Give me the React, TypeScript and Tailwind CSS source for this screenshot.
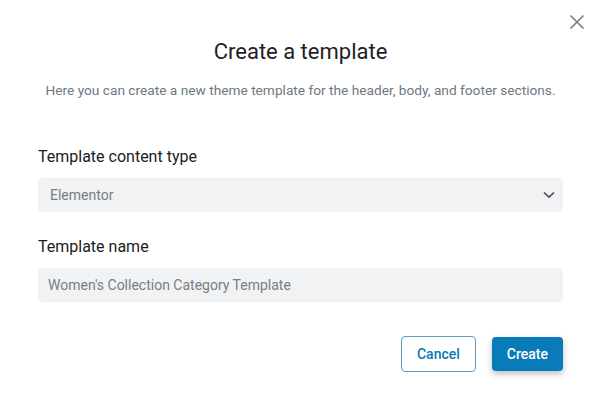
export default function App() {
  return (
    <div
      className="relative h-[409px] w-[601px] bg-white px-[38px] text-[#1f2124]"
      style={{ fontFamily: 'Roboto, "Liberation Sans", sans-serif' }}
    >
      <button className="absolute right-[16px] top-[14px] text-[#7a7a7a]" aria-label="Close">
        <svg width="16" height="16" viewBox="0 0 16 16" fill="none" stroke="currentColor" strokeWidth="1.6">
          <path d="M1.5 1.5 L14.5 14.5 M14.5 1.5 L1.5 14.5" />
        </svg>
      </button>

      <div className="pt-[37px] text-center">
        <h1 className="text-[22px] font-normal leading-[30px] text-[#1f2124]">Create a template</h1>
        <p className="mt-[13px] text-[13.7px] leading-[20px] text-[#6d7882]">
          Here you can create a new theme template for the header, body, and footer sections.
        </p>
      </div>

      <div className="mt-[47px]">
        <label className="block text-[16px] font-normal leading-[20px] text-[#1a1c1e]">Template content type</label>
        <div className="mt-[11px] flex h-[34px] items-center justify-between rounded-[4px] bg-[#f1f2f3] pl-[12px] pr-[8px]">
          <span className="text-[14px] text-[#767e86]">Elementor</span>
          <svg width="12" height="8" viewBox="0 0 12 8" fill="none" stroke="#4a4f55" strokeWidth="1.7">
            <path d="M1 1.5 L6 6.2 L11 1.5" />
          </svg>
        </div>
      </div>

      <div className="mt-[25px]">
        <label className="block text-[16px] font-normal leading-[20px] text-[#1a1c1e]">Template name</label>
        <div className="mt-[11px] flex h-[34px] items-center rounded-[4px] bg-[#f1f2f3] px-[10px]">
          <span className="text-[14px] text-[#767e86]">Women's Collection Category Template</span>
        </div>
      </div>

      <div className="mt-[34px] flex items-center justify-end gap-[16px]">
        <button className="h-[36px] rounded-[4px] border border-[#5b9bc0] px-[15px] text-[14px] font-medium text-[#0c78b2]">
          Cancel
        </button>
        <button className="h-[34px] rounded-[4px] bg-[#0a7bb9] px-[15px] text-[14px] font-medium text-white shadow-[0_3px_6px_rgba(0,0,0,0.25)]">
          Create
        </button>
      </div>
    </div>
  )
}
